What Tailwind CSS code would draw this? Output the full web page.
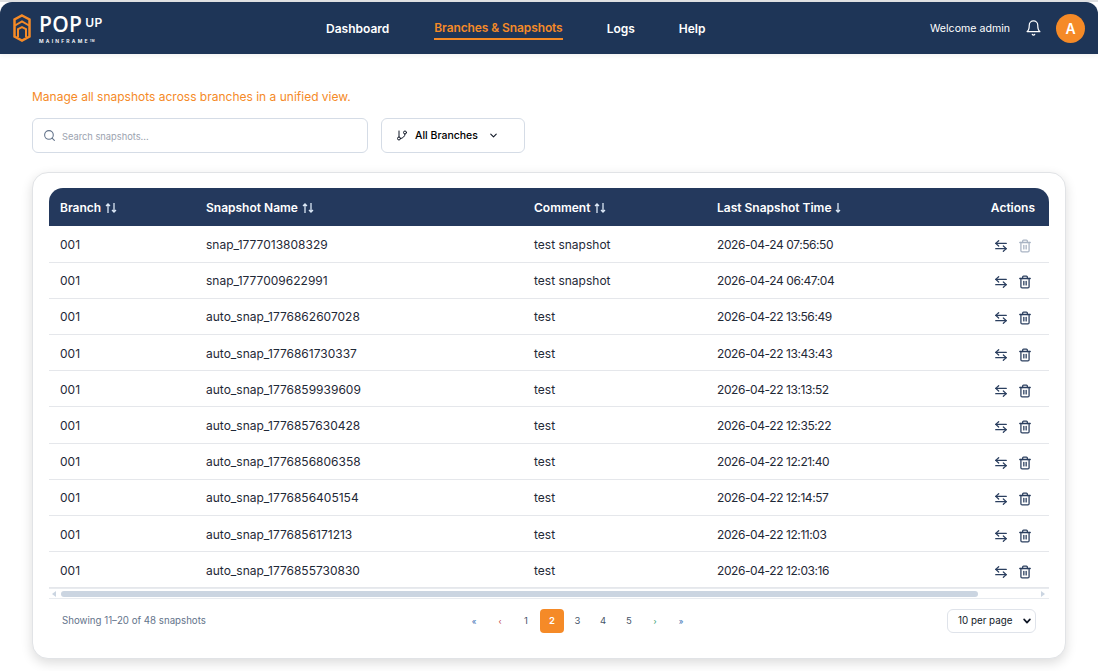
<!DOCTYPE html>
<html lang="en">
<head>
  <meta charset="utf-8"/>
  <meta content="width=device-width, initial-scale=1" name="viewport"/>
  <title>Pop Up Mainframe</title>
  <script src="https://cdn.jsdelivr.net/npm/@tailwindcss/browser@4"></script>
</head>
<body class="bg-white font-['Inter',sans-serif] text-[#1f2937] h-[671px] overflow-hidden">
  <!-- Header -->
  <div class="h-[2px] bg-[#dfe0e2]"></div>
  <header class="h-[52px] bg-[#1e3557] rounded-t-[12px] flex items-center relative shadow-[0_2px_4px_rgba(0,0,0,0.05)]">
    <div class="w-[306px] pl-[13px] flex items-center shrink-0">
      <svg width="18" height="28" viewBox="0 0 18 28" fill="none" stroke="#f58a27" stroke-width="2.500">
        <path d="M9 1.500 16.500 5.500v17L9 26.500 1.500 22.500v-17z"/>
        <path d="M2 11.500 9 7.500l7 4M5 23V15l4-2 4 2v8" stroke-width="2"/>
      </svg>
      <div class="ml-[8px] text-white leading-none">
        <div class="flex items-start">
          <span class="text-[21px] font-semibold tracking-[0.3px] leading-[22px] font-['Open_Sans',sans-serif]">POP</span>
          <span class="ml-[3px] text-[12px] font-semibold leading-[20px] tracking-[0.5px]">UP</span>
        </div>
        <div class="text-[5px] font-semibold tracking-[2.200px] mt-[3px] leading-[6px]">MAINFRAME<span class="text-[3px] tracking-normal align-top">TM</span></div>
      </div>
    </div>
    <nav class="flex items-center text-[12px] font-semibold text-white leading-[17px] pl-[20px]">
      <a class="mr-[45px]">Dashboard</a>
      <a class="mr-[44px] text-[#f58a27] tracking-[-0.100px] border-b-2 border-[#f58a27] pb-[2px] mt-[3px]">Branches &amp; Snapshots</a>
      <a class="mr-[44px]">Logs</a>
      <a>Help</a>
    </nav>
    <div class="ml-auto flex items-center pr-[13px]">
      <span class="text-[10.600px] text-white mr-[15px] mt-[1px]">Welcome admin</span>
      <svg class="mr-[14px]" width="17" height="18" viewBox="0 0 24 24" fill="none" stroke="white" stroke-width="1.700" stroke-linecap="round" stroke-linejoin="round">
        <path d="M6 8a6 6 0 0 1 12 0c0 7 3 9 3 9H3s3-2 3-9"/>
        <path d="M10.300 21a2 2 0 0 0 3.400 0"/>
      </svg>
      <div class="w-[29px] h-[29px] rounded-full bg-[#f58a27] text-white text-[14px] font-semibold flex items-center justify-center">A</div>
    </div>
  </header>

  <main class="px-[32px]">
    <p class="mt-[34px] text-[12px] leading-[18px] text-[#f58a27]">Manage all snapshots across branches in a unified view.</p>

    <!-- Filters -->
    <div class="mt-[12px] flex gap-[13px]">
      <div class="w-[336px] h-[35px] border border-[#d5dce6] rounded-[6px] flex items-center pl-[10px] bg-white">
        <svg width="13" height="13" viewBox="0 0 24 24" fill="none" stroke="#64748b" stroke-width="2" stroke-linecap="round">
          <circle cx="11" cy="11" r="8"/><path d="m21 21-4.300-4.300"/>
        </svg>
        <span class="ml-[6px] text-[9.300px] text-[#9ca3af] mt-[3px]">Search snapshots...</span>
      </div>
      <div class="w-[144px] h-[35px] border border-[#d5dce6] rounded-[6px] flex items-center pl-[14px] bg-white text-black">
        <svg width="12" height="13" viewBox="0 0 24 24" fill="none" stroke="#111827" stroke-width="2" stroke-linecap="round" stroke-linejoin="round">
          <path d="M6 3v12"/><circle cx="18" cy="6" r="3"/><circle cx="6" cy="18" r="3"/><path d="M18 9a9 9 0 0 1-9 9"/>
        </svg>
        <span class="ml-[7px] text-[10.500px] font-medium">All Branches</span>
        <svg class="ml-[10px]" width="11" height="11" viewBox="0 0 24 24" fill="none" stroke="#111827" stroke-width="2.400" stroke-linecap="round" stroke-linejoin="round">
          <path d="m6 9 6 6 6-6"/>
        </svg>
      </div>
    </div>

    <!-- Table card -->
    <section class="mt-[19px] w-[1034px] h-[487px] bg-white rounded-[16px] border border-[#e1e3e6] shadow-[0_4px_12px_rgba(0,0,0,0.14)] px-[16px] pt-[15px]">
      <table class="w-[1000px] table-fixed border-collapse text-[12px]">
        <colgroup>
          <col class="w-[146px]"/><col class="w-[328px]"/><col class="w-[183px]"/><col class="w-[200px]"/><col/>
        </colgroup>
        <thead class="bg-[#24395d] text-white font-semibold text-left">
          <tr class="h-[38px]">
            <th class="pl-[11px] pt-[2px] font-semibold rounded-tl-[14px]"><span class="inline-flex items-center gap-[4px]">Branch <svg width="12" height="10" viewBox="0 0 12 10" fill="none" stroke="#dbe7f5" stroke-width="1.300"><path d="M3 10V1M1 3l2-2 2 2M9 0v9M7 7l2 2 2-2"/></svg></span></th>
            <th class="pl-[11px] pt-[2px] font-semibold"><span class="inline-flex items-center gap-[4px]">Snapshot Name <svg width="12" height="10" viewBox="0 0 12 10" fill="none" stroke="#dbe7f5" stroke-width="1.300"><path d="M3 10V1M1 3l2-2 2 2M9 0v9M7 7l2 2 2-2"/></svg></span></th>
            <th class="pl-[11px] pt-[2px] font-semibold"><span class="inline-flex items-center gap-[4px]">Comment <svg width="12" height="10" viewBox="0 0 12 10" fill="none" stroke="#dbe7f5" stroke-width="1.300"><path d="M3 10V1M1 3l2-2 2 2M9 0v9M7 7l2 2 2-2"/></svg></span></th>
            <th class="pl-[11px] pt-[2px] font-semibold"><span class="inline-flex items-center gap-[3px]">Last Snapshot Time <svg width="6" height="10" viewBox="0 0 6 10" fill="none" stroke="#dbe7f5" stroke-width="1.300"><path d="M3 0v9M1 7l2 2 2-2"/></svg></span></th>
            <th class="pr-[14px] pt-[2px] font-semibold text-right rounded-tr-[14px]">Actions</th>
          </tr>
        </thead>
        <tbody id="rows"></tbody>
      </table>

      <!-- Scrollbar -->
      <div class="w-[1000px] h-[11px] border-t border-b border-[#e8ebef] bg-white flex items-center relative">
        <span class="ml-[3px] w-0 h-0 border-y-[3px] border-y-transparent border-r-[4px] border-r-[#cbd5e1]"></span>
        <span class="ml-[5px] w-[917px] h-[6px] rounded-full bg-[#cbd5e1]"></span>
        <span class="ml-auto mr-[4px] w-0 h-0 border-y-[3px] border-y-transparent border-l-[4px] border-l-[#cbd5e1]"></span>
      </div>

      <!-- Footer -->
      <div class="w-[1000px] mt-[10px] flex items-center relative h-[24px]">
        <span class="ml-[13px] text-[9.700px] text-[#64748b]">Showing 11–20 of 48 snapshots</span>
        <div class="absolute left-[412px] top-0 flex items-center text-[9.500px] text-[#475569] h-[24px]">
          <span class="w-[26px] text-center text-[8px] text-[#3b6fb5]">«</span>
          <span class="w-[26px] text-center text-[8px] text-[#c2414b]">‹</span>
          <span class="w-[26px] text-center">1</span>
          <span class="w-[24px] h-[24px] mx-[1px] rounded-[4px] bg-[#f58a27] text-white font-semibold flex items-center justify-center">2</span>
          <span class="w-[25px] text-center">3</span>
          <span class="w-[26px] text-center">4</span>
          <span class="w-[26px] text-center">5</span>
          <span class="w-[26px] text-center text-[8px] text-[#2f9e6e]">›</span>
          <span class="w-[26px] text-center text-[8px] text-[#3b6fb5]">»</span>
        </div>
        <div class="ml-auto mr-[13px] w-[89px] h-[24px] border border-[#dfe3ea] rounded-[6px] flex items-center pl-[10px] text-[9.800px] text-[#111827]">
          10 per page
          <svg class="ml-auto mr-[3px]" width="10" height="10" viewBox="0 0 24 24" fill="none" stroke="#111827" stroke-width="4" stroke-linecap="round" stroke-linejoin="round"><path d="m5 8 7 8 7-8"/></svg>
        </div>
      </div>
    </section>
  </main>

<script>
  const snapshots = [
    ['snap_1777013808329', 'test snapshot', '2026-04-24 07:56:50'],
    ['snap_1777009622991', 'test snapshot', '2026-04-24 06:47:04'],
    ['auto_snap_1776862607028', 'test', '2026-04-22 13:56:49'],
    ['auto_snap_1776861730337', 'test', '2026-04-22 13:43:43'],
    ['auto_snap_1776859939609', 'test', '2026-04-22 13:13:52'],
    ['auto_snap_1776857630428', 'test', '2026-04-22 12:35:22'],
    ['auto_snap_1776856806358', 'test', '2026-04-22 12:21:40'],
    ['auto_snap_1776856405154', 'test', '2026-04-22 12:14:57'],
    ['auto_snap_1776856171213', 'test', '2026-04-22 12:11:03'],
    ['auto_snap_1776855730830', 'test', '2026-04-22 12:03:16'],
  ];

  const swapIcon = `<svg width="14" height="14" viewBox="0 0 24 24" fill="none" stroke="#2b3f5f" stroke-width="2.200" stroke-linecap="round" stroke-linejoin="round"><path d="M8 3 3 7.500 8 12"/><path d="M3 7.500h18"/><path d="m16 12 5 4.500-5 4.500"/><path d="M21 16.500H3"/></svg>`;

  const trashIcon = color => `<svg width="14" height="14" viewBox="0 0 24 24" fill="none" stroke="${color}" stroke-width="2.200" stroke-linecap="round" stroke-linejoin="round"><path d="M3 6h18"/><path d="M8 6V3.500A1.500 1.500 0 0 1 9.500 2h5A1.500 1.500 0 0 1 16 3.500V6"/><path d="M5 6v14a2 2 0 0 0 2 2h10a2 2 0 0 0 2-2V6"/><path d="M10 11v6"/><path d="M14 11v6"/></svg>`;

  document.getElementById('rows').innerHTML = snapshots.map((s, i) => `
    <tr class="h-[36.200px] border-b border-[#e5e7eb]">
      <td class="pl-[11px] pt-[2px]">001</td>
      <td class="pl-[11px] pt-[2px]">${s[0]}</td>
      <td class="pl-[11px] pt-[2px]">${s[1]}</td>
      <td class="pl-[11px] pt-[2px] tracking-[-0.420px]">${s[2]}</td>
      <td class="pr-[17px] pt-[2px]"><div class="flex justify-end gap-[10px] mt-[2px]">${swapIcon}${trashIcon(i === 0 ? '#a9b4c4' : '#2b3f5f')}</div></td>
    </tr>`).join('');
</script>
</body>
</html>
